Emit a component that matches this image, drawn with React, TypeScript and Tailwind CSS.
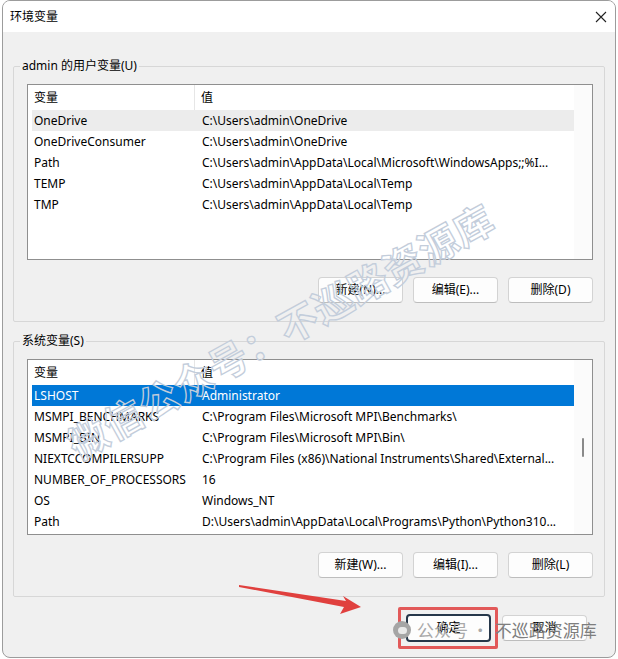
import React from "react";

type Row = { name: string; value: string; state?: "hover" | "selected" };

const userRows: Row[] = [
  { name: "OneDrive", value: "C:\\Users\\admin\\OneDrive", state: "hover" },
  { name: "OneDriveConsumer", value: "C:\\Users\\admin\\OneDrive" },
  { name: "Path", value: "C:\\Users\\admin\\AppData\\Local\\Microsoft\\WindowsApps;;%I..." },
  { name: "TEMP", value: "C:\\Users\\admin\\AppData\\Local\\Temp" },
  { name: "TMP", value: "C:\\Users\\admin\\AppData\\Local\\Temp" },
];

const sysRows: Row[] = [
  { name: "LSHOST", value: "Administrator", state: "selected" },
  { name: "MSMPI_BENCHMARKS", value: "C:\\Program Files\\Microsoft MPI\\Benchmarks\\" },
  { name: "MSMPI_BIN", value: "C:\\Program Files\\Microsoft MPI\\Bin\\" },
  { name: "NIEXTCCOMPILERSUPP", value: "C:\\Program Files (x86)\\National Instruments\\Shared\\External..." },
  { name: "NUMBER_OF_PROCESSORS", value: "16" },
  { name: "OS", value: "Windows_NT" },
  { name: "Path", value: "D:\\Users\\admin\\AppData\\Local\\Programs\\Python\\Python310..." },
];

function VarList({ rows, scroll }: { rows: Row[]; scroll?: boolean }) {
  return (
    <div className="flex h-[176px] border border-[#8f8f8f] bg-white">
      <div className="flex-1 pl-[4px] overflow-hidden">
        <div className="flex h-[25px] items-center">
          <div className="w-[163px] h-full pl-[2px] flex items-center border-r border-[#e6e6e6]">变量</div>
          <div className="pl-[6px]">值</div>
        </div>
        {rows.map((r) => (
          <div
            key={r.name + r.value}
            className={
              "flex h-[21px] items-center whitespace-nowrap " +
              (r.state === "selected"
                ? "bg-[#0078d7] text-white"
                : r.state === "hover"
                ? "bg-[#ececec]"
                : "")
            }
          >
            <div className="w-[170px] pl-[2px]">{r.name}</div>
            <div>{r.value}</div>
          </div>
        ))}
      </div>
      <div className="w-[18px] bg-[#fbfbfb]">
        {scroll && <div className="ml-[8px] mt-[78px] w-[2px] h-[19px] rounded-full bg-[#8a8a8a]" />}
      </div>
    </div>
  );
}

function Btn({ children, focus }: { children: React.ReactNode; focus?: boolean }) {
  return (
    <div
      className={
        "w-[85px] flex items-center justify-center rounded-[4px] bg-[#fdfdfd] " +
        (focus
          ? "h-[28px] border-2 border-[#26374a]"
          : "h-[26px] border border-[#d3d3d3] border-b-[#bdbdbd]")
      }
    >
      {children}
    </div>
  );
}

function Group({
  label,
  rows,
  scroll,
  buttons,
}: {
  label: string;
  rows: Row[];
  scroll?: boolean;
  buttons: string[];
}) {
  return (
    <fieldset className="border border-[#d7d7d7] rounded-[2px]">
      <legend className="ml-[6px] px-[2px] leading-[16px]">{label}</legend>
      <div className="pl-[13px] pr-[11px] pt-[10px] pb-[18px]">
        <VarList rows={rows} scroll={scroll} />
        <div className="mt-[17px] flex justify-end gap-[10px]">
          {buttons.map((b) => (
            <Btn key={b}>{b}</Btn>
          ))}
        </div>
      </div>
    </fieldset>
  );
}

export default function App() {
  return (
    <div className="relative w-[618px] h-[659px] overflow-hidden bg-white text-[12px] text-black font-['Noto_Sans','Noto_Sans_CJK_SC',sans-serif]">
      <div className="ml-[2px] w-[614px] h-[658px] flex flex-col overflow-hidden rounded-[8px] border border-[#9c9c9c] bg-[#f0f0f0]">
        <div className="h-[31px] shrink-0 bg-white flex items-center justify-between pl-[7px] pr-[8px]">
          <span className="text-[12px]">环境变量</span>
          <svg width="12" height="12" viewBox="0 0 12 12">
            <path d="M1 1 L11 11 M11 1 L1 11" stroke="#222" strokeWidth="1.1" />
          </svg>
        </div>
        <div className="flex flex-col pl-[10px] pr-[10px]">
          <div className="mt-[26px]">
            <Group label="admin 的用户变量(U)" rows={userRows} buttons={["新建(N)...", "编辑(E)...", "删除(D)"]} />
          </div>
          <div className="mt-[11px]">
            <Group label="系统变量(S)" rows={sysRows} scroll buttons={["新建(W)...", "编辑(I)...", "删除(L)"]} />
          </div>
          <div className="mt-[17px] flex justify-end gap-[11px] pr-[18px]">
            <Btn focus>确定</Btn>
            <div className="mt-[1px]">
              <Btn>取消</Btn>
            </div>
          </div>
        </div>
      </div>

      {/* diagonal watermark */}
      <div className="pointer-events-none absolute left-[280px] top-[330px] -translate-x-1/2 -translate-y-1/2 -rotate-[29deg] whitespace-nowrap text-[39px] font-bold tracking-[1px] text-transparent [-webkit-text-stroke:1.3px_#c3cddb] font-['Noto_Sans_CJK_SC',sans-serif]">
        微信公众号：不巡路资源库
      </div>

      {/* red annotation arrow */}
      <svg className="pointer-events-none absolute left-0 top-0" width="618" height="659">
        <polygon points="239,585 346,601 343,596 361,607 340,614 344,607 239,587" fill="#e0403e" />
      </svg>

      {/* red highlight box */}
      <div className="pointer-events-none absolute left-[398px] top-[607px] w-[100px] h-[42px] rounded-[2px] border-[3px] border-[#e04848]/90" />

      {/* bottom watermark */}
      <div className="pointer-events-none absolute left-[393px] top-[619px] flex items-center gap-[6px] text-[#8c8c8c] font-['Noto_Sans_CJK_SC',sans-serif]">
        <div className="w-[18px] h-[18px] rounded-full bg-[#a5a5a5] flex items-center justify-center">
          <div className="w-[9px] h-[7px] rounded-full bg-[#e8e8e8]" />
        </div>
        <span className="text-[17px] leading-[22px] text-[#a9a9a9]">公众号 ·</span>
        <span className="text-[17px] leading-[22px] text-[#7e7e7e]">不巡路资源库</span>
      </div>
    </div>
  );
}
